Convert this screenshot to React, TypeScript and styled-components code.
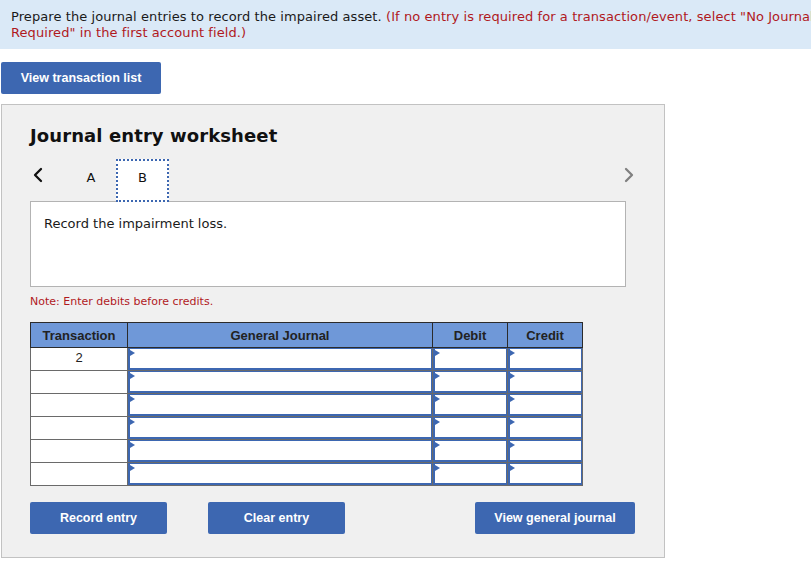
import React from "react";
import styled, { createGlobalStyle } from "styled-components";

const Global = createGlobalStyle`
  html, body { margin: 0; padding: 0; background: #fff; overflow: hidden; }
  body { font-family: "DejaVu Sans", Verdana, sans-serif; }
`;

const Page = styled.div`
  width: 811px;
  height: 565px;
  overflow: hidden;
`;

const Banner = styled.div`
  width: 900px;
  box-sizing: border-box;
  height: 49px;
  background: #dae9f7;
  padding: 9px 11px 0;
  font-size: 13px;
  line-height: 16px;
  letter-spacing: 0.08px;
  color: #1a1a1a;
`;

const Red = styled.span`
  color: #b0191e;
`;

const BlueButton = styled.button<{ $w: number }>`
  width: ${(p) => p.$w}px;
  height: 32px;
  border: none;
  border-radius: 2px;
  background: #3d67b1;
  color: #fff;
  font-family: "Liberation Sans", Arial, sans-serif;
  font-weight: bold;
  font-size: 12.5px;
  padding: 0;
  cursor: pointer;
`;

const TopButtonRow = styled.div`
  padding: 13px 0 0 1px;
`;

const Panel = styled.div`
  margin: 10px 0 0 1px;
  width: 664px;
  height: 454px;
  box-sizing: border-box;
  background: #f0f0f0;
  border: 1px solid #c2c2c2;
  padding: 20px 0 0 28px;
`;

const Title = styled.h2`
  margin: 0;
  font-size: 18px;
  font-weight: bold;
  line-height: 22px;
  color: #111;
  letter-spacing: 0.1px;
`;

const TabRow = styled.div`
  display: flex;
  align-items: stretch;
  height: 43px;
  margin-top: 12px;
  width: 605px;
  position: relative;
  z-index: 1;
`;

const NavArrow = styled.div<{ $right?: boolean }>`
  width: 36px;
  box-sizing: border-box;
  display: flex;
  align-items: flex-start;
  justify-content: ${(p) => (p.$right ? "flex-end" : "flex-start")};
  padding-left: ${(p) => (p.$right ? "0" : "2px")};
  padding-top: 8px;
  margin-left: ${(p) => (p.$right ? "auto" : "0")};
`;

const Tab = styled.div<{ $active?: boolean; $w: number }>`
  width: ${(p) => p.$w}px;
  box-sizing: border-box;
  display: flex;
  align-items: center;
  justify-content: center;
  font-size: 13px;
  color: #111;
  padding-bottom: 6px;
  background: ${(p) => (p.$active ? "#fff" : "transparent")};
  border: ${(p) => (p.$active ? "2px dotted #3d67b1" : "2px solid transparent")};
`;

const Description = styled.div`
  margin-top: -1px;
  width: 596px;
  height: 86px;
  box-sizing: border-box;
  background: #fff;
  border: 1px solid #b3b3b3;
  padding: 14px 13px;
  font-size: 13px;
  color: #1a1a1a;
`;

const Note = styled.div`
  margin-top: 8px;
  font-size: 11px;
  color: #b0191e;
  line-height: 13px;
`;

const Table = styled.table`
  margin-top: 14px;
  border-collapse: collapse;
  table-layout: fixed;
  font-family: "Liberation Sans", Arial, sans-serif;
`;

const Th = styled.th<{ $w: number }>`
  width: ${(p) => p.$w}px;
  height: 24px;
  padding: 0;
  background: #6f98d8;
  border: 1px solid #2b2b2b;
  font-size: 13px;
  font-weight: bold;
  color: #222;
  text-align: center;
`;

const Td = styled.td`
  height: 22px;
  padding: 0;
  border: 1px solid #6a6a6a;
  background: #fff;
  font-size: 13px;
  color: #222;
  text-align: center;
  vertical-align: top;
  line-height: 20px;
`;

const InputTd = styled.td`
  height: 22px;
  padding: 0;
  border: 1px solid #6a6a6a;
  background: #fff;
`;

const InputBox = styled.div`
  position: relative;
  height: 22px;
  box-sizing: border-box;
  border-left: 2px solid #3d67b1;
  border-top: 1px solid #3d67b1;
  border-right: 1px solid #3d67b1;
  border-bottom: 2px solid #3d67b1;
  background: #fff;
  &::before {
    content: "";
    position: absolute;
    left: 0;
    top: 1px;
    border-left: 5px solid #3d67b1;
    border-top: 3.5px solid transparent;
    border-bottom: 3.5px solid transparent;
  }
`;

const BottomRow = styled.div`
  display: flex;
  margin-top: 16px;
  width: 606px;
`;

const Spacer = styled.div<{ $w: number }>`
  width: ${(p) => p.$w}px;
`;

const Chevron = ({ dir, color }: { dir: "l" | "r"; color: string }) => (
  <svg width="12" height="16" viewBox="0 0 12 16">
    <path
      d={dir === "l" ? "M9 2 L3 8 L9 14" : "M3 2 L9 8 L3 14"}
      fill="none"
      stroke={color}
      strokeWidth="2.3"
      strokeLinecap="round"
      strokeLinejoin="round"
    />
  </svg>
);

const rows = ["2", "", "", "", "", ""];

export default function App() {
  return (
    <Page>
      <Global />
      <Banner>
        Prepare the journal entries to record the impaired asset.{" "}
        <Red>
          (If no entry is required for a transaction/event, select "No Journal Entry
          Required" in the first account field.)
        </Red>
      </Banner>
      <TopButtonRow>
        <BlueButton $w={160}>View transaction list</BlueButton>
      </TopButtonRow>
      <Panel>
        <Title>Journal entry worksheet</Title>
        <TabRow>
          <NavArrow>
            <Chevron dir="l" color="#111" />
          </NavArrow>
          <Tab $w={50}>A</Tab>
          <Tab $w={53} $active>
            B
          </Tab>
          <NavArrow $right>
            <Chevron dir="r" color="#808080" />
          </NavArrow>
        </TabRow>
        <Description>Record the impairment loss.</Description>
        <Note>Note: Enter debits before credits.</Note>
        <Table>
          <thead>
            <tr>
              <Th $w={96}>Transaction</Th>
              <Th $w={304}>General Journal</Th>
              <Th $w={74}>Debit</Th>
              <Th $w={74}>Credit</Th>
            </tr>
          </thead>
          <tbody>
            {rows.map((r, i) => (
              <tr key={i}>
                <Td>{r}</Td>
                <InputTd>
                  <InputBox />
                </InputTd>
                <InputTd>
                  <InputBox />
                </InputTd>
                <InputTd>
                  <InputBox />
                </InputTd>
              </tr>
            ))}
          </tbody>
        </Table>
        <BottomRow>
          <BlueButton $w={137}>Record entry</BlueButton>
          <Spacer $w={41} />
          <BlueButton $w={137}>Clear entry</BlueButton>
          <Spacer $w={130} />
          <BlueButton $w={160}>View general journal</BlueButton>
        </BottomRow>
      </Panel>
    </Page>
  );
}
